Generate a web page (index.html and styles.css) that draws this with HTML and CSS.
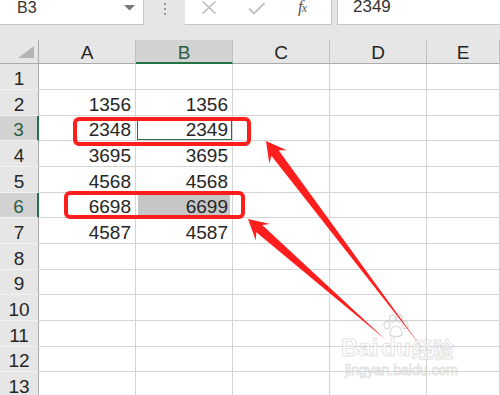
FILE: index.html
```html
<!DOCTYPE html>
<html lang="zh-CN">
<head>
  <meta charset="UTF-8" />
  <title>Excel - B3</title>
  <link rel="stylesheet" href="styles.css">
</head>
<body>
  <div class="toolbar">
    <div class="namebox">
      <span>B3</span>
      <svg class="caret" width="11" height="6" viewBox="0 0 11 6"><polygon points="0,0 11,0 5.5,5.5" fill="#777"/></svg>
    </div>
    <div class="grip"><i></i><i></i><i></i></div>
    <div class="fx-tools">
      <svg class="cancel" width="16" height="13" viewBox="0 0 16 13"><path d="M1.5 0.5 L14.5 12.5 M14.5 0.5 L1.5 12.5" stroke="#bdbdbd" stroke-width="1.6" fill="none"/></svg>
      <svg class="enter" width="18" height="13" viewBox="0 0 18 13"><path d="M1 6.5 L6 11.5 L16.5 1" stroke="#c2c2c2" stroke-width="1.8" fill="none"/></svg>
      <span class="fx">f<sub>x</sub></span>
    </div>
    <div class="formula"><span>2349</span></div>
  </div>

  <div class="sheet">
    <div class="corner"><svg width="16" height="12" viewBox="0 0 16 12"><polygon points="16,0 16,12 0,12" fill="#b4b4b4"/></svg></div>
    <div class="colhead">A</div>
    <div class="colhead sel">B</div>
    <div class="colhead">C</div>
    <div class="colhead">D</div>
    <div class="colhead">E</div>

    <div class="rowhead">1</div><div class="cell"></div><div class="cell"></div><div class="cell"></div><div class="cell"></div><div class="cell"></div>
    <div class="rowhead">2</div><div class="cell">1356</div><div class="cell">1356</div><div class="cell"></div><div class="cell"></div><div class="cell"></div>
    <div class="rowhead sel">3</div><div class="cell">2348</div><div class="cell active">2349</div><div class="cell"></div><div class="cell"></div><div class="cell"></div>
    <div class="rowhead">4</div><div class="cell">3695</div><div class="cell">3695</div><div class="cell"></div><div class="cell"></div><div class="cell"></div>
    <div class="rowhead">5</div><div class="cell">4568</div><div class="cell">4568</div><div class="cell"></div><div class="cell"></div><div class="cell"></div>
    <div class="rowhead sel">6</div><div class="cell">6698</div><div class="cell picked">6699</div><div class="cell"></div><div class="cell"></div><div class="cell"></div>
    <div class="rowhead">7</div><div class="cell">4587</div><div class="cell">4587</div><div class="cell"></div><div class="cell"></div><div class="cell"></div>
    <div class="rowhead">8</div><div class="cell"></div><div class="cell"></div><div class="cell"></div><div class="cell"></div><div class="cell"></div>
    <div class="rowhead">9</div><div class="cell"></div><div class="cell"></div><div class="cell"></div><div class="cell"></div><div class="cell"></div>
    <div class="rowhead">10</div><div class="cell"></div><div class="cell"></div><div class="cell"></div><div class="cell"></div><div class="cell"></div>
    <div class="rowhead">11</div><div class="cell"></div><div class="cell"></div><div class="cell"></div><div class="cell"></div><div class="cell"></div>
    <div class="rowhead">12</div><div class="cell"></div><div class="cell"></div><div class="cell"></div><div class="cell"></div><div class="cell"></div>
    <div class="rowhead">13</div><div class="cell"></div><div class="cell"></div><div class="cell"></div><div class="cell"></div><div class="cell"></div>
  </div>

  <!-- red annotation marks drawn over the sheet -->
  <svg class="marks" width="500" height="395" viewBox="0 0 500 395">
    <rect x="75" y="119" width="174" height="25" rx="4" fill="none" stroke="#ff1e1e" stroke-width="4"/>
    <rect x="66" y="193" width="177" height="24" rx="4" fill="none" stroke="#ff1e1e" stroke-width="4"/>
    <polygon points="266,141 269.3,163.6 271.4,155.7 420,345 278.6,150.3 286.8,150.3" fill="#ff1e1e"/>
    <polygon points="248,219 255.8,240.4 256.3,232.3 386,340 262.2,225.1 270.3,223.9" fill="#ff1e1e"/>
  </svg>

  <div class="watermark">
    <div class="brand">
      <span>Bai</span>
      <span class="du">
        <svg class="paw" width="28" height="24" viewBox="0 0 28 24">
          <g fill="none" stroke="rgba(160,160,160,0.4)" stroke-width="1.2">
            <ellipse cx="5" cy="11" rx="3" ry="3.6"/>
            <ellipse cx="10.5" cy="4.5" rx="3" ry="3.6"/>
            <ellipse cx="17.5" cy="4.5" rx="3" ry="3.6"/>
            <ellipse cx="23" cy="11" rx="3" ry="3.6"/>
            <path d="M8 21 C8 15 11 12 14 12 C17 12 20 15 20 21 C18 23 10 23 8 21 Z"/>
          </g>
        </svg>
        du
      </span>
      <span class="cn">经验</span>
    </div>
    <div class="site">jingyan.baidu.com</div>
  </div>
</body>
</html>
```
FILE: styles.css
```css
body {
  margin: 0;
  width: 500px;
  height: 395px;
  overflow: hidden;
  position: relative;
  background: #e6e6e6;
  font-family: "Liberation Sans", Arial, sans-serif;
  color: #262626;
}

/* formula bar */
.toolbar {
  display: flex;
  height: 25px;
}

.namebox {
  box-sizing: border-box;
  width: 144px;
  height: 25px;
  background: #fff;
  border-right: 1px solid #c6c6c6;
  border-bottom: 1px solid #c6c6c6;
  display: flex;
  justify-content: space-between;
  padding: 0 8px 0 17px;
  font-size: 16px;
  line-height: 15px;
  color: #333;
}

.namebox .caret {
  margin-top: 5px;
}

.grip {
  width: 41px;
  display: flex;
  flex-direction: column;
  align-items: center;
  gap: 3px;
  padding-top: 3px;
}

.grip i {
  display: block;
  width: 2px;
  height: 2px;
  background: #9a9a9a;
}

.fx-tools {
  box-sizing: border-box;
  width: 147px;
  height: 25px;
  background: #fff;
  border-right: 1px solid #c6c6c6;
  border-bottom: 1px solid #c6c6c6;
  display: flex;
  align-items: flex-start;
  padding-left: 16px;
}

.fx-tools .cancel {
  margin-top: 1px;
}

.fx-tools .enter {
  margin: 2px 0 0 31px;
}

.fx {
  margin-left: 32px;
  font-family: "Liberation Serif", serif;
  font-style: italic;
  font-size: 17px;
  line-height: 13px;
  color: #555;
}

.fx sub {
  font-size: 12px;
  vertical-align: 0;
  margin-left: -1px;
}

.formula {
  box-sizing: border-box;
  flex: 1;
  margin-left: 5px;
  height: 25px;
  background: #fff;
  border-left: 1px solid #c6c6c6;
  border-bottom: 1px solid #c6c6c6;
  padding-left: 15px;
  font-size: 17px;
  line-height: 14px;
  color: #333;
}

/* grid */
.sheet {
  margin-top: 15px;
  display: grid;
  grid-template-columns: 39px 97px 97px 97px 97px 1fr;
  grid-template-rows: 24px 26px 26px 25px 26px 26px 25px 26px 26px 25px 26px 26px 25px 26px;
  font-size: 19px;
}

.corner,
.colhead,
.rowhead,
.cell {
  box-sizing: border-box;
}

.corner {
  border-right: 1px solid #ababab;
  border-bottom: 1px solid #ababab;
  display: flex;
  justify-content: flex-end;
  align-items: flex-end;
  padding: 0 4px 5px 0;
}

.colhead {
  border-right: 1px solid #c0c0c0;
  border-bottom: 1px solid #ababab;
  text-align: center;
  line-height: 23px;
  padding-top: 1px;
}

.colhead.sel {
  background: #d2d2d2;
  border-bottom: 2px solid #217346;
  color: #2c5e44;
}

.rowhead {
  border-right: 1px solid #ababab;
  border-bottom: 1px solid #f2f2f2;
  text-align: center;
  display: flex;
  align-items: flex-end;
  justify-content: center;
  padding-bottom: 1px;
  line-height: 19px;
}

.rowhead.sel {
  background: #d2d2d2;
  border-right: 2px solid #217346;
  color: #2c5e44;
}

.cell {
  background: #fff;
  border-right: 1px solid #d4d4d4;
  border-bottom: 1px solid #d4d4d4;
  display: flex;
  align-items: flex-end;
  justify-content: flex-end;
  padding: 0 4px 1px 0;
  line-height: 19px;
}

.cell.active {
  outline: 1px solid #217346;
  outline-offset: -2px;
}

.cell.picked {
  background: #c6c6c6;
  box-shadow: inset 0 0 0 2px #fff;
}

/* overlays */
.marks {
  position: absolute;
  left: 0;
  top: 0;
  pointer-events: none;
}

.watermark {
  position: absolute;
  left: 341px;
  top: 318px;
  pointer-events: none;
  color: rgba(255, 255, 255, 0.55);
  -webkit-text-stroke: 1px rgba(170, 170, 170, 0.35);
}

.brand {
  display: flex;
  align-items: flex-end;
  font-weight: bold;
  font-size: 24px;
  line-height: 24px;
  height: 42px;
}

.brand .du {
  display: flex;
  flex-direction: column;
  align-items: center;
  margin-left: 3px;
}

.brand .paw {
  margin-bottom: -2px;
}

.brand .cn {
  font-family: "Noto Sans CJK SC", sans-serif;
  font-size: 21px;
  line-height: 24px;
  margin-left: 1px;
}

.site {
  margin-top: 2px;
  margin-left: 4px;
  font-size: 14px;
  line-height: 16px;
}
```
